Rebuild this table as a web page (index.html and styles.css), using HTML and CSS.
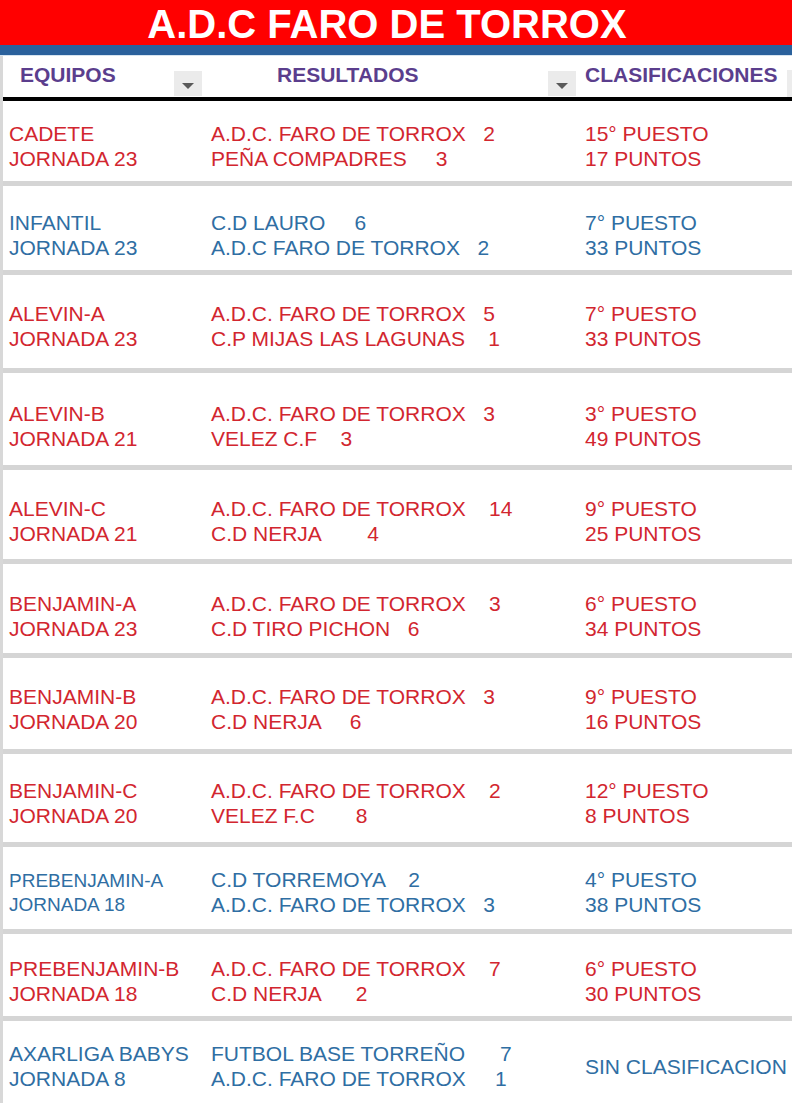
FILE: index.html
```html
<!DOCTYPE html>
<html lang="es">
<head>
<meta charset="utf-8">
<title>A.D.C FARO DE TORROX</title>
<link rel="stylesheet" href="styles.css">
</head>
<body>
<div class="sheet">
  <div class="title-band">A.D.C FARO DE TORROX</div>
  <div class="blue-band"></div>
  <div class="hairline"></div>
  <div class="table">
    <div class="head-row">
      <div class="hcell hcell-a"><span class="hlabel">EQUIPOS</span><span class="dropdown"><span class="tri"></span></span></div>
      <div class="hcell hcell-b"><span class="hlabel">RESULTADOS</span><span class="dropdown"><span class="tri"></span></span></div>
      <div class="hcell hcell-c"><span class="hlabel">CLASIFICACIONES</span><span class="stub"></span></div>
    </div>
    <div class="black-rule"></div>

    <div class="row red">
      <div class="c1"><span class="ln">CADETE</span><span class="ln">JORNADA 23</span></div>
      <div class="c2"><span class="ln">A.D.C. FARO DE TORROX   2</span><span class="ln">PEÑA COMPADRES     3</span></div>
      <div class="c3"><span class="ln">15° PUESTO</span><span class="ln">17 PUNTOS</span></div>
    </div>
    <div class="row blue">
      <div class="c1"><span class="ln">INFANTIL</span><span class="ln">JORNADA 23</span></div>
      <div class="c2"><span class="ln">C.D LAURO     6</span><span class="ln">A.D.C FARO DE TORROX   2</span></div>
      <div class="c3"><span class="ln">7° PUESTO</span><span class="ln">33 PUNTOS</span></div>
    </div>
    <div class="row red">
      <div class="c1"><span class="ln">ALEVIN-A</span><span class="ln">JORNADA 23</span></div>
      <div class="c2"><span class="ln">A.D.C. FARO DE TORROX   5</span><span class="ln">C.P MIJAS LAS LAGUNAS    1</span></div>
      <div class="c3"><span class="ln">7° PUESTO</span><span class="ln">33 PUNTOS</span></div>
    </div>
    <div class="row red">
      <div class="c1"><span class="ln">ALEVIN-B</span><span class="ln">JORNADA 21</span></div>
      <div class="c2"><span class="ln">A.D.C. FARO DE TORROX   3</span><span class="ln">VELEZ C.F    3</span></div>
      <div class="c3"><span class="ln">3° PUESTO</span><span class="ln">49 PUNTOS</span></div>
    </div>
    <div class="row red">
      <div class="c1"><span class="ln">ALEVIN-C</span><span class="ln">JORNADA 21</span></div>
      <div class="c2"><span class="ln">A.D.C. FARO DE TORROX    14</span><span class="ln">C.D NERJA        4</span></div>
      <div class="c3"><span class="ln">9° PUESTO</span><span class="ln">25 PUNTOS</span></div>
    </div>
    <div class="row red">
      <div class="c1"><span class="ln">BENJAMIN-A</span><span class="ln">JORNADA 23</span></div>
      <div class="c2"><span class="ln">A.D.C. FARO DE TORROX    3</span><span class="ln">C.D TIRO PICHON   6</span></div>
      <div class="c3"><span class="ln">6° PUESTO</span><span class="ln">34 PUNTOS</span></div>
    </div>
    <div class="row red">
      <div class="c1"><span class="ln">BENJAMIN-B</span><span class="ln">JORNADA 20</span></div>
      <div class="c2"><span class="ln">A.D.C. FARO DE TORROX   3</span><span class="ln">C.D NERJA     6</span></div>
      <div class="c3"><span class="ln">9° PUESTO</span><span class="ln">16 PUNTOS</span></div>
    </div>
    <div class="row red">
      <div class="c1"><span class="ln">BENJAMIN-C</span><span class="ln">JORNADA 20</span></div>
      <div class="c2"><span class="ln">A.D.C. FARO DE TORROX    2</span><span class="ln">VELEZ F.C       8</span></div>
      <div class="c3"><span class="ln">12° PUESTO</span><span class="ln">8 PUNTOS</span></div>
    </div>
    <div class="row blue">
      <div class="c1 small"><span class="ln">PREBENJAMIN-A</span><span class="ln">JORNADA 18</span></div>
      <div class="c2"><span class="ln">C.D TORREMOYA    2</span><span class="ln">A.D.C. FARO DE TORROX   3</span></div>
      <div class="c3"><span class="ln">4° PUESTO</span><span class="ln">38 PUNTOS</span></div>
    </div>
    <div class="row red">
      <div class="c1"><span class="ln">PREBENJAMIN-B</span><span class="ln">JORNADA 18</span></div>
      <div class="c2"><span class="ln">A.D.C. FARO DE TORROX    7</span><span class="ln">C.D NERJA      2</span></div>
      <div class="c3"><span class="ln">6° PUESTO</span><span class="ln">30 PUNTOS</span></div>
    </div>
    <div class="row blue">
      <div class="c1"><span class="ln">AXARLIGA BABYS</span><span class="ln">JORNADA 8</span></div>
      <div class="c2"><span class="ln">FUTBOL BASE TORREÑO      7</span><span class="ln">A.D.C. FARO DE TORROX     1</span></div>
      <div class="c3 mid"><span class="ln">SIN CLASIFICACION</span></div>
    </div>
  </div>
</div>
</body>
</html>
```
FILE: styles.css
```css
html, body {
  margin: 0;
  padding: 0;
  background: #ffffff;
}

.sheet {
  width: 792px;
  height: 1104px;
  overflow: hidden;
  font-family: "Liberation Sans", Arial, sans-serif;
}

.title-band {
  height: 45px;
  box-sizing: border-box;
  padding: 3px 18px 0 0;
  background: #ff0000;
  color: #ffffff;
  font-size: 40px;
  font-weight: bold;
  line-height: 42px;
  text-align: center;
  white-space: nowrap;
}

.blue-band {
  height: 10px;
  background: #2a619c;
}

.hairline {
  height: 1px;
  background: #d6e4f0;
}

.table {
  border-left: 3px solid #d8d8d8;
}

.head-row {
  display: grid;
  grid-template-columns: 199px 375px 1fr;
  height: 41px;
  background: #ffffff;
}

.hcell {
  display: flex;
  justify-content: space-between;
  align-items: flex-start;
  box-sizing: border-box;
}

.hlabel {
  padding-top: 6px;
  font-size: 21px;
  line-height: 25px;
  font-weight: bold;
  color: #5b3e8d;
  white-space: nowrap;
}

.hcell-a {
  padding-left: 17px;
}

.hcell-b {
  padding-left: 75px;
  padding-right: 1px;
}

.hcell-c {
  padding-left: 8px;
}

.dropdown {
  align-self: flex-end;
  width: 28px;
  height: 25px;
  margin-bottom: 1px;
  background: #ebebeb;
  display: flex;
  justify-content: center;
  align-items: center;
}

.tri {
  width: 0;
  height: 0;
  margin-top: 4px;
  border-left: 6px solid transparent;
  border-right: 6px solid transparent;
  border-top: 6px solid #595959;
}

.stub {
  align-self: flex-end;
  width: 5px;
  height: 27px;
  background: #ececec;
}

.black-rule {
  height: 4px;
  background: #000000;
}

.row {
  display: grid;
  grid-template-columns: 199px 375px 1fr;
  align-items: start;
  font-size: 21px;
  line-height: 25px;
  box-sizing: content-box;
}

.row + .row {
  border-top: 5px solid #d5d5d5;
}

.row.red { color: #d2262f; }
.row.blue { color: #2f6ea3; }

.c1, .c2, .c3 {
  display: flex;
  flex-direction: column;
}

.c1 { padding-left: 6px; }
.c2 { padding-left: 9px; }
.c3 { padding-left: 8px; }

.ln {
  white-space: pre;
}

.c1.small {
  font-size: 19px;
  line-height: 24px;
  padding-top: 2px;
}

.c3.mid {
  height: 50px;
  justify-content: center;
}

.row:nth-child(3)  { height: 60px; padding-top: 20px; }
.row:nth-child(4)  { height: 60px; padding-top: 24px; }
.row:nth-child(5)  { height: 67px; padding-top: 26px; }
.row:nth-child(6)  { height: 64px; padding-top: 28px; }
.row:nth-child(7)  { height: 63px; padding-top: 26px; }
.row:nth-child(8)  { height: 62px; padding-top: 27px; }
.row:nth-child(9)  { height: 65px; padding-top: 26px; }
.row:nth-child(10) { height: 64px; padding-top: 24px; }
.row:nth-child(11) { height: 62px; padding-top: 20px; }
.row:nth-child(12) { height: 60px; padding-top: 22px; }
.row:nth-child(13) { height: 62px; padding-top: 20px; }
```
